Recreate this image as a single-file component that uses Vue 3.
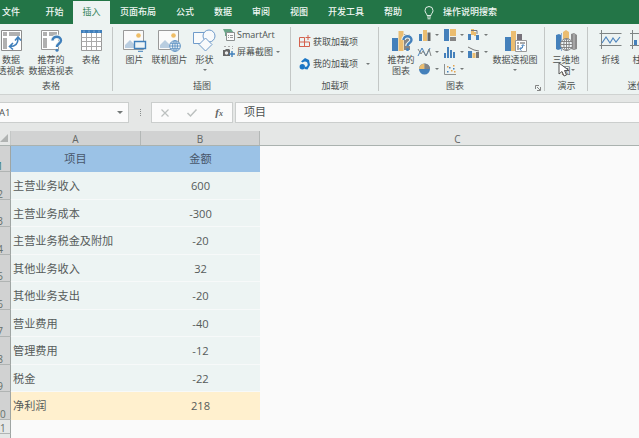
<script setup>
const tabs = [
  { t: '文件', w: 36, x: 'file' }, { t: '开始', w: 37 }, { t: '插入', w: 37, x: 'active' },
  { t: '页面布局', w: 56 }, { t: '公式', w: 38 }, { t: '数据', w: 38 }, { t: '审阅', w: 38 },
  { t: '视图', w: 38 }, { t: '开发工具', w: 56 }, { t: '帮助', w: 38 },
]

const sheet = '<path d="M1.5 1.5h20v20h-20z" fill="#fff" stroke="#8c8c8c"/>'
const photo = '<path d="M.5 1.5h20v19H.5z" fill="#fafafa" stroke="#999"/><path d="M2 19v-3l5-5 4 4v4z" fill="#b9cde0"/><circle cx="15.500" cy="6.500" r="2.300" fill="#efbd66"/>'
const globe = (x, y, r, c) => `<g transform="translate(${x} ${y})" fill="#eef4f6" stroke="${c}" stroke-width=".9"><circle r="${r}"/><ellipse rx="${r * 0.45}" ry="${r}"/><path d="M${-r} 0H${r}M0 ${-r}V${r}M${-r * 0.85} ${-r * 0.5}H${r * 0.85}M${-r * 0.85} ${r * 0.5}H${r * 0.85}" fill="none"/></g>`

const big = {
  pivot: sheet + '<path d="M3 3h4v4H3zM9 3h11v4H9zM3 9h4v11H3z" fill="#b0b0b0"/><path d="M10 17.500c5 0 8-3 8-8M15 11.500l3-3.500 3 3.500M13 14L9.500 17.500l3.500 3" fill="none" stroke="#3f7fbb" stroke-width="1.600"/>',
  recPivot: '<path d="M1.500 1.500h17v19h-17z" fill="#fff" stroke="#999"/><path d="M3 3h4v4H3zM9 3h8v4H9zM3 9h4v10H3z" fill="#b0b0b0"/><path d="M12.500 11.500c0-5 8.500-5 8.500 0 0 3-4 3-4 6.500" fill="none" stroke="#edf3f2" stroke-width="4.500"/><path d="M12.500 11.500c0-5 8.500-5 8.500 0 0 3-4 3-4 6.500" fill="none" stroke="#3f7fbb" stroke-width="2.400"/><circle cx="17" cy="21.300" r="1.500" fill="#3f7fbb"/>',
  table: '<path d="M1.500 1.500h20v20h-20z" fill="#fff" stroke="#999"/><path d="M1.500 8.500h20M1.500 12.500h20M1.500 17.500h20M6.500 3v18M11.500 3v18M16.500 3v18" stroke="#aaa"/><path d="M1 1h21v3H1z" fill="#3f7fbb"/><path d="M4 1.500v2M9 1.500v2M14 1.500v2M19 1.500v2" stroke="#8db4d9"/>',
  picture: photo + '<path d="M11.500 12.500h11v7h-11z" fill="#eef4f6" stroke="#3f7fbb" stroke-width="1.400"/><path d="M15 22.300h5" stroke="#3f7fbb"/>',
  online: photo + globe(17, 17, 5.4, '#5a8ec2'),
  shapes: '<path d="M.5 3.500h12v11H.5z" fill="#f8fafb" stroke="#6f9bca"/><circle cx="16" cy="7" r="6" fill="#f8fafb" stroke="#6f9bca"/><path d="M12.500 9l6.500 6.500-6.500 6.500L6 15.500z" fill="#f8fafb" stroke="#6f9bca"/>',
  recChart: '<path d="M2 9h6v13H2z" fill="#4480bb"/><path d="M8.500 2h5v20h-5z" fill="#ebbd70"/><path d="M14 5h6v16h-6z" fill="#858585"/><path d="M13.500 11c0-5 8-5 8 0 0 3-4 3-4 6" fill="none" stroke="#edf3f2" stroke-width="4.500"/><path d="M13.500 11c0-5 8-5 8 0 0 3-4 3-4 6" fill="none" stroke="#4480bb" stroke-width="2.400"/><circle cx="17.500" cy="20.500" r="1.600" fill="#4480bb"/>',
  pivotChart: '<path d="M1 8h6v14H1z" fill="#4480bb"/><path d="M7 2h5v20H7z" fill="#ebbd70"/><path d="M13 5h5v8h-5z" fill="#77717a"/><path d="M11.500 11.500h11v11h-11z" fill="#fff" stroke="#999"/><path d="M13 13h2v2h-2zM16 13h5v2h-5zM13 16h2v5h-2z" fill="#aaa"/><path d="M16 20q3 0 3-4M17.500 17l1.500-1.500 1.500 1.500M17.500 18L15.500 20l2 1.500" fill="none" stroke="#4480bb"/>',
  map: '<path d="M1 6l3-1 2 1v14l-3 1-2-1z" fill="#4480bb"/><path d="M6.500 4v18" stroke="#8aadd2"/><path d="M8 3l3-2 3 2v18H8z" fill="#ebbd70"/><path d="M16 5l3-1 3 2v14l-3 1-3-1z" fill="#8b8b8b"/><path d="M19 5v15" stroke="#c0c0c0"/>' + globe(11.5, 15.500, 6, '#7c7c7c'),
  line: '<path d="M2.500 1v19M.5 4.500h22M.5 16.500h22" fill="none" stroke="#7f8585"/><path d="M3 14l4-6 4 6 3-5 3 4 4-5" fill="none" stroke="#4f86be" stroke-width="1.200"/>',
  column: '<path d="M2.500 1v19M0 4.500h22M0 16.500h22" fill="none" stroke="#7f8585"/><path d="M4 11h3v5H4zM9 8h3v8H9zM14 6h3v10h-3z" fill="#4480bb"/>',
}

const mini = [
  '<path d="M0 5h3v7H0z" fill="#4480bb"/><path d="M4 1h4v11H4z" fill="#ebbd70"/><path d="M8.500 3.500h3V12h-3z" fill="#666"/>',
  '<path d="M0 0h5v12H0z" fill="#4480bb"/><path d="M6 0h6v7H6z" fill="#ebbd70"/><path d="M6 8h6v4H6z" fill="#858585"/>',
  '<path d="M0 5h3v6H0zM8 6h3v5H8z" fill="#4480bb"/><path d="M3 0h3v6H3zM6 3h2v4H6z" fill="#ebbd70"/><path d="M3 1.500h6V5" fill="none" stroke="#777"/>',
  '<path d="M-1 10l4-8 4 8 4-8" fill="none" stroke="#4480bb"/><path d="M-1 3l3 5 2-3 3 5 3-7 2 7" fill="none" stroke="#828686"/>',
  '<path d="M0 7h2v5H0zM3 1h2v11H3zM6 4h2v8H6zM9 6h2v6H9z" fill="#4480bb"/>',
  '<path d="M0 5h4v7H0z" fill="#4480bb"/><path d="M4.500 7h3v5h-3z" fill="#ebbd70"/><path d="M8 6h3v6H8z" fill="#777"/><path d="M0 1l6 3 5 1" fill="none" stroke="#777"/>',
  '<circle cx="5.500" cy="6" r="5.500" fill="#4480bb"/><path d="M5.500 6V.5a5.500 5.500 0 0 1 5.500 5.500z" fill="#858585"/><path d="M5.500 6V.5A5.500 5.500 0 0 0 0 6z" fill="#ebbd70"/>',
  '<path d="M.5 1v10.500H12" fill="none" stroke="#8d9292"/><path d="M3 8h1.500v1.500H3zM5 4h1.500v1.500H5zM9 5h1.500v1.500H9z" fill="#4480bb"/><path d="M3 3h1.500v1.500H3zM7 7h1.500v1.500H7zM10 8h1.500v1.500H10zM9 2h1.500v1.500H9z" fill="#e3a24c"/>',
]

const rows = [
  ['项目', '金额'], ['主营业务收入', '600'], ['主营业务成本', '-300'], ['主营业务税金及附加', '-20'],
  ['其他业务收入', '32'], ['其他业务支出', '-20'], ['营业费用', '-40'], ['管理费用', '-12'],
  ['税金', '-22'], ['净利润', '218'],
]
</script>

<template>
  <div class="app">
    <nav class="tabs">
      <div v-for="t in tabs" :key="t.t" class="tab" :class="t.x" :style="{ width: t.w + 'px' }">{{ t.t }}</div>
      <svg class="bulb" width="10" height="14" viewBox="0 0 10 14"><path d="M3 9.500C3 7.500 1 7 1 4.500a4 4 0 0 1 8 0C9 7 7 7.500 7 9.500zM3 11h4M3.500 12.800h3" fill="none" stroke="#e4f0e9" /></svg>
      <span class="tell">操作说明搜索</span>
    </nav>

    <section class="ribbon">
      <div class="group g-table">
        <div class="tools">
          <div class="btn"><svg class="ic" viewBox="0 0 23 23" v-html="big.pivot" /><span>数据<br>透视表</span></div>
          <div class="btn"><svg class="ic" viewBox="0 0 23 23" v-html="big.recPivot" /><span>推荐的<br>数据透视表</span></div>
          <div class="btn"><svg class="ic" viewBox="0 0 23 23" v-html="big.table" /><span>表格</span></div>
        </div>
        <div class="name">表格</div>
      </div>
      <div class="group g-illus">
        <div class="tools">
          <div class="btn"><svg class="ic" viewBox="0 0 23 23" v-html="big.picture" /><span>图片</span></div>
          <div class="btn"><svg class="ic" viewBox="0 0 23 23" v-html="big.online" /><span>联机图片</span></div>
          <div class="btn"><svg class="ic" viewBox="0 0 23 23" v-html="big.shapes" /><span>形状</span><i class="arr" /></div>
          <div class="stack">
            <div class="row"><svg width="14" height="13" viewBox="0 0 14 13"><path d="M1 1h8l3 4H6v3H3V5z" fill="#6aa588" /><path d="M4.500 4.500h8v8h-8z" fill="#fafafa" stroke="#8b9090" /><path d="M6 7.500h1M8 7.500h3M6 9.500h1M8 9.500h3" stroke="#9a9a9a" /></svg><span class="latin">SmartArt</span></div>
            <div class="row"><svg width="14" height="13" viewBox="0 0 14 13"><path d="M1 5h2l1-1h3l1 1v6H1z" fill="#666" /><circle cx="4.500" cy="8" r="1.700" fill="#eee" /><path d="M2 1.500h2M6 1.500h2M10 1.500h1M10.500 3v1" stroke="#aaa" /><path d="M10 6v6M7 9h6" stroke="#3f7fbb" stroke-width="1.400" /></svg><span>屏幕截图</span><i class="arr" /></div>
          </div>
        </div>
        <div class="name">插图</div>
      </div>
      <div class="group g-addin">
        <div class="tools">
          <div class="row"><svg width="12" height="12" viewBox="0 0 12 12"><path d="M.5 2.500h5v9h-5zM.5 7h10v4.500H.5zM9 0v5M6.500 2.500h5" fill="none" stroke="#d4624e" /></svg><span>获取加载项</span></div>
          <div class="row"><svg width="12" height="12" viewBox="0 0 12 12"><path d="M2 3.500L6 0l4 2 1 5-2.500 4.500L5.500 11 6 6z" fill="#1b76c5" /><circle cx="6" cy="6.200" r="2.600" fill="#edf3f2" /><circle cx="3.300" cy="8.700" r="2.700" fill="#1b76c5" /></svg><span>我的加载项</span><i class="arr" /></div>
        </div>
        <div class="name">加载项</div>
      </div>
      <div class="group g-chart">
        <div class="tools">
          <div class="btn"><svg class="ic" viewBox="0 0 23 23" v-html="big.recChart" /><span>推荐的<br>图表</span></div>
          <div class="minis">
            <div v-for="(m, i) in mini" :key="i" class="mini"><svg width="12" height="12" viewBox="0 0 12 12" v-html="m" /><i class="arr" /></div>
          </div>
          <div class="btn"><svg class="ic" viewBox="0 0 23 23" v-html="big.pivotChart" /><span>数据透视图</span><i class="arr" /></div>
        </div>
        <div class="name">图表</div>
        <svg class="launch" width="6" height="6" viewBox="0 0 6 6"><path d="M.5 4V.5H4M2 2l3 3M5.500 2v3.500H2" fill="none" stroke="#777" stroke-width=".9" /></svg>
      </div>
      <div class="group g-demo">
        <div class="tools">
          <div class="btn"><svg class="ic" viewBox="0 0 23 23" v-html="big.map" /><span>三维地<br>图</span><i class="arr side" /></div>
        </div>
        <div class="name">演示</div>
        <svg class="cursor" width="12" height="16" viewBox="0 0 12 16"><path d="M1 1v11l3-2.500 2 4.500 2.500-1-2-4.500H11z" fill="#fff" stroke="#555" /></svg>
      </div>
      <div class="group g-spark">
        <div class="tools">
          <div class="btn"><svg class="ic" viewBox="0 0 23 23" v-html="big.line" /><span>折线</span></div>
          <div class="btn"><svg class="ic" viewBox="0 0 23 23" v-html="big.column" /><span>柱形</span></div>
        </div>
        <div class="name">迷你图</div>
      </div>
    </section>

    <section class="formula">
      <div class="namebox"><span>A1</span><i class="arr" /></div>
      <div class="dots"><i /><i /><i /><i /></div>
      <div class="fx">
        <svg width="8" height="8" viewBox="0 0 8 8"><path d="M.5.5l7 7M7.500.5l-7 7" stroke="#bcc0bf" stroke-width="1.200" /></svg>
        <svg width="10" height="8" viewBox="0 0 10 8"><path d="M.5 4l3 3L9.500.5" fill="none" stroke="#bcc0bf" stroke-width="1.500" /></svg>
        <span class="f">f<small>x</small></span>
      </div>
      <div class="value">项目</div>
    </section>

    <section class="grid">
      <div class="heads">
        <div class="corner"><svg width="8" height="8" viewBox="0 0 8 8"><path d="M8 0v8H0z" fill="#b0b3b2" /></svg></div>
        <div class="ch a">A</div><div class="ch b">B</div><div class="ch c">C</div>
      </div>
      <div v-for="(r, i) in rows" :key="i" class="line" :class="{ first: i === 0, last: i === 9 }">
        <div class="rh"><span>{{ i + 1 }}</span></div>
        <div class="cell ca">{{ r[0] }}</div>
        <div class="cell cb">{{ r[1] }}</div>
      </div>
      <div class="line short"><div class="rh"><span>11</span></div></div>
      <div class="line tail"><div class="rh" /></div>
    </section>
  </div>
</template>

<style>
body { background: #fafafa; overflow: hidden; }
</style>

<style scoped>
.app { width: 639px; height: 438px; overflow: hidden; background: #fafafa; font-family: "Open Sans", "Noto Sans CJK SC", sans-serif; font-size: 9px; color: #4c5150; }
.app * { box-sizing: border-box; }
svg { display: block; flex: none; overflow: visible; }
.tabs { height: 24px; background: #237547; display: flex; align-items: flex-start; color: #f0f7f3; }
.tab { flex: none; height: 23px; margin-top: 1px; line-height: 22px; text-align: center; white-space: nowrap; font-weight: 500; }
.tab.file { padding-right: 14px; }
.tab.active { background: #edf3f2; color: #37835a; font-weight: 400; }
.bulb { margin: 6px 0 0 12px; }
.tell { margin: 1px 0 0 9px; line-height: 22px; font-weight: 500; white-space: nowrap; }

.ribbon { height: 71px; background: #edf3f2; display: flex; border-bottom: 1px solid #cfd2d1; }
.group { position: relative; flex: none; height: 70px; display: flex; flex-direction: column; }
.group::after { content: ""; position: absolute; right: 0; top: 3px; width: 1px; height: 64px; background: #c3c7c6; }
.g-table { width: 113px; }
.g-illus { width: 178px; }
.g-addin { width: 88px; }
.g-chart { width: 166px; }
.g-demo { width: 43px; }
.g-spark { width: 106px; }
.g-spark::after { display: none; }
.tools { height: 56px; display: flex; padding-top: 5px; }
.name { height: 12px; line-height: 12px; text-align: center; }
.btn { flex: none; width: 36px; display: flex; flex-direction: column; align-items: center; white-space: nowrap; text-align: center; line-height: 11px; }
.btn > span { margin-top: 2px; }
.ic { width: 23px; height: 23px; }
.arr { flex: none; width: 0; height: 0; border: 2px solid transparent; border-top: 2.5px solid #747978; border-bottom: 0; }
.btn .arr { margin-top: 4px; }
.btn .arr.side { margin: -7px 0 0 13px; }
.row { display: flex; align-items: center; white-space: nowrap; }
.g-table .tools { margin-left: -9px; }
.g-table .btn { width: 40px; }
.g-table .name { padding-right: 11px; }
.g-illus .tools { padding-left: 4px; }
.g-illus .btn { width: 35px; }
.stack { margin-top: -3px; }
.stack .row { height: 17px; }
.stack .row > span { margin-left: 1px; }
.stack .latin { font-size: 9px; }
.stack .arr { margin-left: 3px; }
.g-addin .tools { flex-direction: column; padding: 6px 0 0 8px; }
.g-addin .row { height: 22.500px; }
.g-addin .row span { margin-left: 2px; }
.g-addin .arr { margin-left: 8px; }
.g-chart .tools { padding-left: 4px; }
.minis { display: grid; grid-template-columns: repeat(3, 24.500px); grid-auto-rows: 17px; align-content: start; margin-top: -3px; }
.mini { display: flex; align-items: center; gap: 4px; }
.g-chart .btn:last-child { width: 45px; }
.g-chart .name { padding-right: 14px; }
.launch { position: absolute; right: 4px; bottom: 3px; }
.g-demo .tools { padding-left: 3px; }
.cursor { position: absolute; left: 13px; top: 38px; }
.g-spark .tools { padding-left: 7px; }
.g-spark .btn { width: 31px; }

.formula { height: 36px; background: #e5e7e6; display: flex; align-items: flex-start; padding-top: 7px; }
.namebox { width: 129px; height: 21px; background: #fbfbfb; border: 1px solid #cbcecd; border-left: 0; display: flex; align-items: center; justify-content: space-between; padding-right: 5px; }
.namebox span { margin-left: -1px; font-size: 9.500px; }
.namebox .arr { border-width: 3px 3px 0; }
.dots { width: 22px; height: 21px; display: flex; flex-direction: column; align-items: center; justify-content: center; gap: 1px; }
.dots i { width: 1px; height: 1px; background: #888d8c; }
.fx { width: 82px; height: 21px; background: #fbfbfb; border: 1px solid #cbcecd; display: flex; align-items: center; padding: 0 9px; justify-content: space-between; }
.f { font: italic 700 11px/18px "Liberation Serif", serif; color: #626665; }
.f small { font-size: 8px; }
.value { flex: 1; height: 21px; margin-left: 2px; background: #fbfbfb; border: 1px solid #cbcecd; border-right: 0; padding-left: 8px; line-height: 17px; font-size: 11px; }

.heads { height: 15px; display: flex; background: #e5e7e6; border-bottom: 1px solid #aab2af; font-size: 10px; line-height: 16px; text-align: center; }
.corner { width: 11px; display: flex; align-items: center; border-right: 1px solid #c4c7c6; }
.ch { flex: none; color: #626665; }
.a { width: 130px; background: #d1d2d2; border-right: 1px solid #b3b7b6; }
.b { width: 119px; background: #d1d2d2; border-right: 1px solid #b3b7b6; }
.c { flex: 1; padding-left: 16px; }
.line { height: 27.550px; display: flex; }
.line.first { height: 26px; }
.rh { flex: none; width: 11px; background: #d1d2d2; border-right: 1px solid #9fa5a3; border-bottom: 1px solid #b0b4b3; display: flex; align-items: flex-end; justify-content: center; font-size: 10px; line-height: 10px; color: #65706b; }
.rh span { margin-left: -10px; }
.first .rh { color: #2f7d6a; }
.cell { font-size: 11.150px; line-height: 27px; color: #565b5a; background: #edf4f3; border-bottom: 1px solid #f7f9f9; white-space: nowrap; }
.ca { width: 130px; padding-left: 2px; }
.cb { width: 119px; text-align: center; }
.first .cell { background: #9bc2e6; border-color: #9bc2e6; text-align: center; line-height: 25px; color: #48566a; }
.first .ca { padding: 0 1px 0 0; }
.last .cell { background: #fff0ce; border-color: #fff0ce; }
.short { height: 14px; }
.short .rh, .tail .rh { background: #e5e7e6; }
.tail { height: 8px; }
</style>
